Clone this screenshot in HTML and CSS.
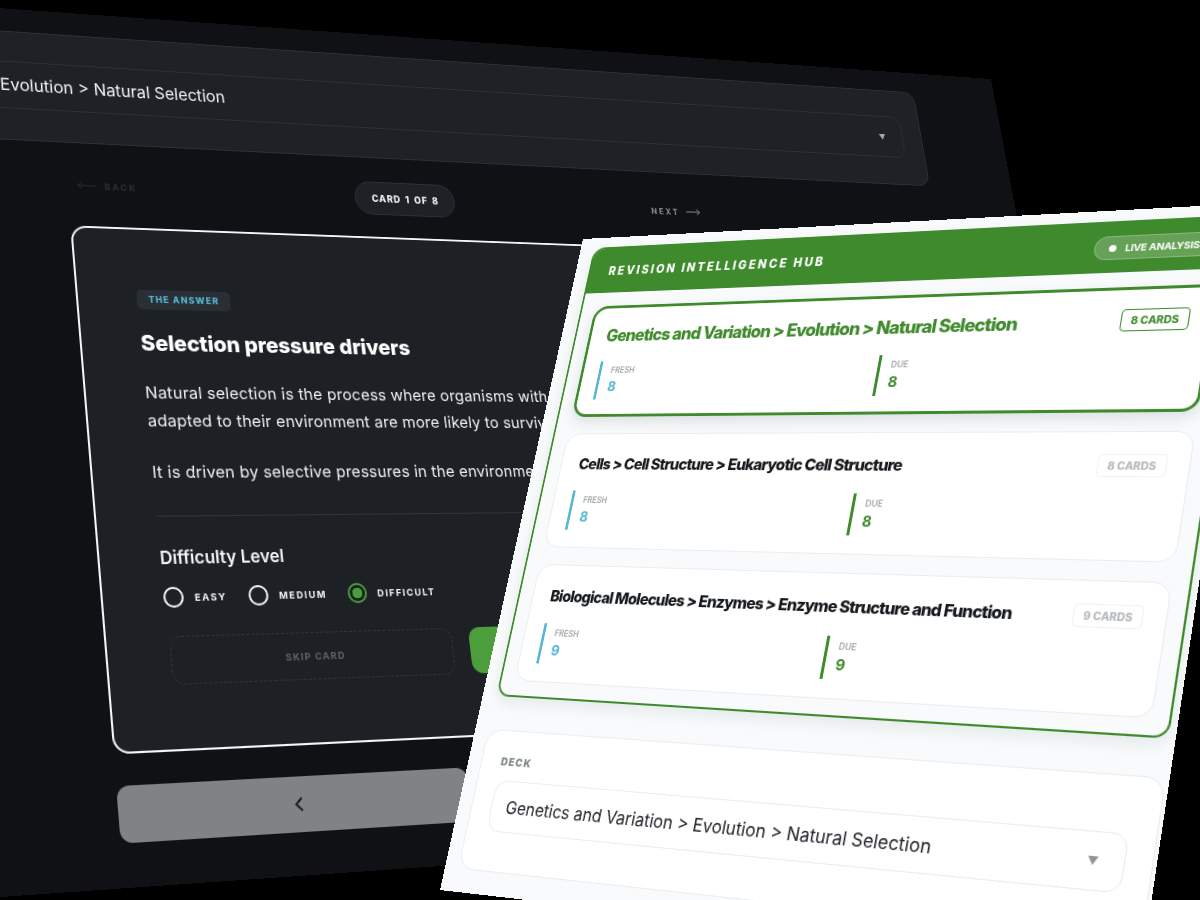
FILE: index.html
```html
<!DOCTYPE html>
<html lang="en">
<head>
  <meta charset="UTF-8" />
  <meta name="viewport" content="width=device-width, initial-scale=1.0" />
  <title>Revision Flashcards</title>
  <link rel="stylesheet" href="styles.css">
</head>
<body>
  <section class="screen study">
    <div class="deck-panel">
      <div class="deck-select">
        <span>Genetics and Variation &gt; Evolution &gt; Natural Selection</span>
        <span class="caret">▼</span>
      </div>
    </div>

    <div class="nav-row">
      <a class="nav-link back">
        <svg width="20" height="10" viewBox="0 0 20 10"><path d="M20 5H1M5 2L1 5l4 3" /></svg>
        BACK
      </a>
      <div class="counter">CARD 1 OF 8</div>
      <a class="nav-link next">
        NEXT
        <svg width="18" height="10" viewBox="0 0 18 10"><path d="M0 5h17M13 2l4 3-4 3" /></svg>
      </a>
    </div>

    <div class="flashcard">
      <span class="answer-tag">THE ANSWER</span>
      <h2>Selection pressure drivers</h2>
      <p>Natural selection is the process where organisms with traits better<br>adapted to their environment are more likely to survive and reproduce.</p>
      <p class="second">It is driven by selective pressures in the environment over time.</p>
      <hr>
      <h3>Difficulty Level</h3>
      <div class="radios">
        <label class="radio"><i></i>EASY</label>
        <label class="radio"><i></i>MEDIUM</label>
        <label class="radio on"><i></i>DIFFICULT</label>
      </div>
      <div class="actions">
        <button class="skip">SKIP CARD</button>
        <button class="submit">SUBMIT</button>
      </div>
    </div>

    <div class="pager">
      <button>
        <svg width="24" height="24" viewBox="0 0 24 24"><path d="M15 18l-6-6 6-6" /></svg>
      </button>
      <button>
        <svg width="24" height="24" viewBox="0 0 24 24"><path d="M9 18l6-6-6-6" /></svg>
      </button>
    </div>
  </section>

  <section class="screen hub">
    <div class="hub-frame">
      <div class="hub-head">
        <span class="hub-title">REVISION INTELLIGENCE HUB</span>
        <span class="live"><i></i>LIVE ANALYSIS</span>
      </div>
      <div class="topics">
        <div class="topic active">
          <div class="topic-row">
            <span class="topic-name">Genetics and Variation &gt; Evolution &gt; Natural Selection</span>
            <span class="count">8 CARDS</span>
          </div>
          <div class="stats">
            <div class="stat fresh"><small>FRESH</small><b>8</b></div>
            <div class="stat due"><small>DUE</small><b>8</b></div>
          </div>
        </div>
        <div class="topic">
          <div class="topic-row">
            <span class="topic-name">Cells &gt; Cell Structure &gt; Eukaryotic Cell Structure</span>
            <span class="count">8 CARDS</span>
          </div>
          <div class="stats">
            <div class="stat fresh"><small>FRESH</small><b>8</b></div>
            <div class="stat due"><small>DUE</small><b>8</b></div>
          </div>
        </div>
        <div class="topic">
          <div class="topic-row">
            <span class="topic-name">Biological Molecules &gt; Enzymes &gt; Enzyme Structure and Function</span>
            <span class="count">9 CARDS</span>
          </div>
          <div class="stats">
            <div class="stat fresh"><small>FRESH</small><b>9</b></div>
            <div class="stat due"><small>DUE</small><b>9</b></div>
          </div>
        </div>
      </div>
    </div>

    <div class="deck-box">
      <div class="deck-label">DECK</div>
      <div class="deck-field">
        <span>Genetics and Variation &gt; Evolution &gt; Natural Selection</span>
        <span class="caret">▼</span>
      </div>
    </div>
  </section>
</body>
</html>
```

FILE: styles.css
```css
* {
  box-sizing: border-box;
}

html, body {
  height: 100%;
}

body {
  margin: 0;
  background-color: #000;
  font-family: Inter, "Liberation Sans", sans-serif;
  overflow: hidden;
}

/* the two screens lie on a free canvas, each tilted in perspective */
.screen {
  position: absolute;
  top: 0;
  left: 0;
  overflow: hidden;
  transform-origin: 0 0;
}

.study {
  width: 1280px;
  height: 860px;
  padding-top: 24px;
  background-color: #0f1114;
  color: #f2f4f6;
  transform: matrix3d(1.0125, 0.073703, 0, 0.00016162, 0.072012, 0.94733, 0, -0.0001089, 0, 0, 1, 0, -100, 1, 0, 1);
}

.hub {
  width: 700px;
  height: 700px;
  padding: 11px 7px 0 16px;
  background-color: #f8fafc;
  transform: matrix3d(0.70014, -0.093657, 0, -0.00020801, -0.24441, 0.84884, 0, -0.00009119, 0, 0, 1, 0, 583, 239, 0, 1);
}

/* dark study screen */
.deck-panel {
  width: 1310px;
  height: 115px;
  margin-left: -143px;
  padding: 31px 25px 0 23px;
  background-color: #1e2125;
  border: 1px solid #2d3238;
  border-radius: 14px;
}

.deck-select {
  display: flex;
  justify-content: space-between;
  align-items: center;
  height: 50px;
  padding: 0 22px 0 9px;
  border: 1px solid #2d3238;
  border-radius: 12px;
  font-size: 17px;
}

.deck-select .caret {
  font-size: 9px;
  color: #a3a7ab;
}

.nav-row {
  display: flex;
  justify-content: space-between;
  align-items: center;
  width: 718px;
  height: 36px;
  margin: 26px 0 24px 152px;
  padding: 0 10px;
}

.nav-link {
  display: flex;
  align-items: center;
  gap: 8px;
  font-size: 9px;
  font-weight: 700;
  letter-spacing: 0.22em;
  color: #8d9196;
}

.nav-link.next {
  letter-spacing: 0.28em;
}

.nav-link svg {
  fill: none;
  stroke: currentColor;
}

.nav-link.back {
  color: #2b2f34;
}

.counter {
  width: 112px;
  height: 36px;
  line-height: 34px;
  text-align: center;
  font-size: 10px;
  font-weight: 800;
  letter-spacing: 0.1em;
  word-spacing: 0.15em;
  background-color: #1e2125;
  border: 1px solid #2d3238;
  border-radius: 18px;
}

.flashcard {
  width: 718px;
  height: 514px;
  margin-left: 152px;
  padding: 62px 59px 0;
  background-color: #1d2126;
  border: 2px solid #f4f5f6;
  border-radius: 16px;
}

.answer-tag {
  display: block;
  width: 96px;
  height: 20px;
  line-height: 20px;
  text-align: center;
  font-size: 9px;
  font-weight: 800;
  letter-spacing: 0.13em;
  color: #56b6d3;
  background-color: #2a2f35;
  border-radius: 5px;
}

.flashcard h2 {
  margin: 21px 0 23px;
  font-size: 22px;
  line-height: 26px;
  font-weight: 800;
  letter-spacing: -0.006em;
  color: #fff;
}

.flashcard p {
  margin: 0;
  font-size: 16.5px;
  line-height: 28px;
  letter-spacing: 0.012em;
  white-space: nowrap;
  color: #eef0f2;
}

.flashcard p.second {
  margin-top: 23px;
}

.flashcard hr {
  height: 1px;
  margin: 29px 0 0;
  border: 0;
  background-color: #30353b;
}

.flashcard h3 {
  margin: 28px 0 16px;
  font-size: 17.3px;
  line-height: 24px;
  font-weight: 600;
}

.radios {
  display: flex;
  gap: 22px;
}

.radio {
  display: flex;
  align-items: center;
  gap: 11px;
  height: 20px;
  font-size: 9.5px;
  font-weight: 700;
  letter-spacing: 0.16em;
}

.radio i {
  display: block;
  width: 20px;
  height: 20px;
  border: 2px solid #f4f5f6;
  border-radius: 50%;
}

.radio.on i {
  border-color: #4a9e3a;
  background: radial-gradient(circle, #4a9e3a 0 5px, transparent 5.5px);
}

.actions {
  display: grid;
  grid-template-columns: 290px 288px;
  gap: 18px;
  margin: 27px 0 0 2px;
}

.actions button {
  height: 46px;
  font-family: inherit;
  font-size: 9.5px;
  font-weight: 700;
  letter-spacing: 0.12em;
  border-radius: 12px;
}

.skip {
  color: #5d6268;
  background: none;
  border: 1px dashed #30353b;
}

.submit {
  color: #fff;
  background-color: #4c9e3c;
  border: 0;
}

.pager {
  display: grid;
  grid-template-columns: 1fr 1fr;
  gap: 14px;
  width: 718px;
  margin: 29px 0 0 152px;
}

.pager button {
  display: flex;
  justify-content: center;
  align-items: center;
  height: 52px;
  background-color: #808385;
  border: 0;
  border-radius: 12px;
}

.pager svg {
  fill: none;
  stroke: #16191c;
  stroke-width: 1.8;
}

/* light analysis screen */
.hub-frame {
  width: 678px;
  height: 489px;
  background-color: #f8fafc;
  border: 2px solid #3f8a2c;
  border-radius: 14px;
  box-shadow: 0 6px 14px rgba(30, 50, 30, 0.08);
  overflow: hidden;
}

.hub-head {
  display: flex;
  justify-content: space-between;
  align-items: center;
  height: 50px;
  padding: 0 23px 0 22px;
  background-color: #3f8a2c;
  color: #fff;
}

.hub-title {
  font-size: 12.5px;
  font-weight: 800;
  letter-spacing: 0.2em;
}

.live {
  display: flex;
  align-items: center;
  gap: 8px;
  height: 24px;
  padding: 0 13px 0 13px;
  font-size: 9.5px;
  font-weight: 700;
  letter-spacing: -0.02em;
  background-color: rgba(255, 255, 255, 0.2);
  border: 1px solid rgba(255, 255, 255, 0.25);
  border-radius: 12px;
}

.live i {
  width: 7px;
  height: 7px;
  background-color: #fff;
  border-radius: 50%;
}

.topics {
  display: flex;
  flex-direction: column;
  gap: 18px;
  padding: 15px 15px 0;
}

.topic {
  height: 123px;
  padding: 20px 20px 0;
  background-color: #fff;
  border: 1px solid #e8edf2;
  border-radius: 16px;
}

.topic.active {
  padding: 18px 18px 0;
  border: 3px solid #3f8a2c;
  box-shadow: 0 6px 14px rgba(30, 50, 30, 0.12);
}

.topic-row {
  display: flex;
  justify-content: space-between;
  align-items: center;
  height: 24px;
  margin-bottom: 17px;
}

.topic-name {
  font-size: 16.4px;
  font-weight: 800;
  letter-spacing: -0.05em;
  color: #14181c;
}

.active .topic-name {
  font-size: 18.4px;
  color: #3f8a2c;
}

.count {
  width: 63px;
  height: 22px;
  line-height: 20px;
  text-align: center;
  font-size: 10px;
  font-weight: 800;
  color: #b4b9bc;
  border: 1px solid #f0f3f6;
  border-radius: 4px;
}

.active .count {
  color: #3f8a2c;
  border-color: #3f8a2c;
}

.stats {
  display: grid;
  grid-template-columns: 1fr 1fr;
  gap: 13px;
}

.stat {
  display: flex;
  flex-direction: column;
  gap: 3px;
  height: 42px;
  padding: 5px 0 0 11px;
  border-left: 3px solid;
}

.stat small {
  font-size: 8.5px;
  line-height: 10px;
  font-weight: 600;
  color: #a0a6a9;
}

.stat b {
  font-size: 15px;
  line-height: 20px;
  font-weight: 700;
}

.fresh {
  border-color: #56b6d3;
  color: #56b6d3;
}

.due {
  border-color: #3f8a2c;
  color: #3f8a2c;
}

.deck-box {
  width: 682px;
  height: 143px;
  margin: 34px 0 0 -1px;
  padding: 25px 23px 0 22px;
  background-color: #fff;
  border: 1px solid #e8edf2;
  border-radius: 18px;
}

.deck-label {
  height: 12px;
  margin-bottom: 13px;
  font-size: 11px;
  line-height: 12px;
  font-weight: 800;
  letter-spacing: 0.1em;
  color: #7b8285;
}

.deck-field {
  display: flex;
  justify-content: space-between;
  align-items: center;
  height: 52px;
  padding: 0 22px 0 16px;
  font-size: 17.4px;
  color: #1d2126;
  border: 1px solid #e8edf2;
  border-radius: 14px;
}

.deck-field .caret {
  font-size: 10px;
  color: #8f9598;
}
```
